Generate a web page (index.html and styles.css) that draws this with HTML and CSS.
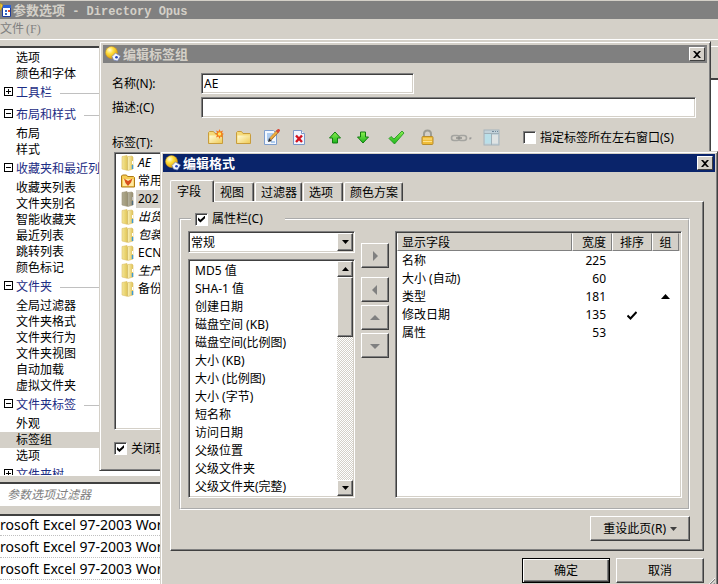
FILE: index.html
```html
<!DOCTYPE html>
<html lang="zh-CN">
<head>
<meta charset="utf-8">
<title>参数选项 - Directory Opus</title>
<link rel="stylesheet" href="styles.css">
</head>
<body>
<svg class="defs" aria-hidden="true">
  <defs>
    <linearGradient id="gold" x1="0" y1="0" x2="1" y2="1"><stop offset="0" stop-color="#fffbd8"/><stop offset="1" stop-color="#f0cc58"/></linearGradient>
    <linearGradient id="tall" x1="0" y1="0" x2="1" y2="0"><stop offset="0" stop-color="#f4e698"/><stop offset="0.45" stop-color="#e3c95c"/><stop offset="0.5" stop-color="#fbf3bc"/><stop offset="1" stop-color="#e0c254"/></linearGradient>
    <radialGradient id="ball" cx="0.35" cy="0.3" r="0.75"><stop offset="0" stop-color="#fffbe0"/><stop offset="0.4" stop-color="#ffe040"/><stop offset="1" stop-color="#e09a00"/></radialGradient>
    <linearGradient id="green" x1="0" y1="0" x2="0" y2="1"><stop offset="0" stop-color="#8cf050"/><stop offset="1" stop-color="#1cb41c"/></linearGradient>
    <symbol id="i-opus" viewBox="0 0 16 16">
      <circle cx="6.500" cy="6.500" r="6" fill="url(#ball)" stroke="#c89020" stroke-width="0.5"/>
      <path d="M7 10.500 10.500 7l1.500 1L15.500 10l-3 5-4-1z" fill="#f4f6ff" stroke="#7483b4" stroke-width="0.7"/>
      <circle cx="11.500" cy="11.200" r="1.300" fill="#2244b8"/>
    </symbol>
    <symbol id="i-tall" viewBox="0 0 14 16">
      <path d="M1 1.500 6 .5l1 1 4-.5 1 1v12l-5 1.500L1 14z" fill="url(#tall)" stroke="#dcc068" stroke-width="0.6"/>
      <path d="M6.500 1.500v13.500" stroke="#c8aa4c" stroke-width="0.7"/>
      <path d="M11.500 10v4" stroke="#3b9bd8" stroke-width="1.400"/>
      <path d="M11.500 6v3" stroke="#fff" stroke-width="1"/>
    </symbol>
    <symbol id="i-folder" viewBox="0 0 17 17">
      <path d="M1.500 14.500v-11l1-1h4l1.500 2h7l.5 1v9z" fill="#f6da78" stroke="#c89c3c"/>
      <path d="M2.500 6.500H15v7.500H2.500z" fill="url(#gold)"/>
    </symbol>
  </defs>
</svg>

<main class="window">
  <header class="window-title">
    <svg class="window-icon" viewBox="0 0 11 16"><path d="M2.500 3.500h8v11h-8z" fill="#fff" stroke="#1c3c9c"/><path d="M2 3h9v3H2z" fill="#2c62d8"/><path d="M5 8h2v2H5zm0 3h2v2H5z" fill="#3468c8"/><path d="M8 8h2v2H8z" fill="#e04c30"/><path d="M0 1l3 2-2 5-1 1z" fill="#f0c838" stroke="#9c7c20" stroke-width=".6"/></svg>
    <h1>参数选项<span class="latin"> - Directory Opus</span></h1>
  </header>
  <nav class="menubar"><button type="button">文件<span>(F)</span></button></nav>
  <div class="workspace">
    <nav class="tree">
      <ul>
        <li>选项</li>
        <li>颜色和字体</li>
        <li class="group"><i class="toggle plus"></i>工具栏</li>
        <li class="group"><i class="toggle"></i>布局和样式</li>
        <li>布局</li>
        <li>样式</li>
        <li class="group"><i class="toggle"></i>收藏夹和最近列表</li>
        <li>收藏夹列表</li>
        <li>文件夹别名</li>
        <li>智能收藏夹</li>
        <li>最近列表</li>
        <li>跳转列表</li>
        <li>颜色标记</li>
        <li class="group"><i class="toggle"></i>文件夹</li>
        <li>全局过滤器</li>
        <li>文件夹格式</li>
        <li>文件夹行为</li>
        <li>文件夹视图</li>
        <li>自动加载</li>
        <li>虚拟文件夹</li>
        <li class="group"><i class="toggle"></i>文件夹标签</li>
        <li>外观</li>
        <li class="selected">标签组</li>
        <li>选项</li>
        <li class="group"><i class="toggle plus"></i>文件夹树</li>
      </ul>
    </nav>
    <section class="page"></section>
  </div>
  <div class="filter"><input type="text" placeholder="参数选项过滤器" aria-label="参数选项过滤器"></div>
  <ul class="files">
    <li>rosoft Excel 97-2003 Wor</li>
    <li>rosoft Excel 97-2003 Wor</li>
    <li>rosoft Excel 97-2003 Wor</li>
  </ul>
</main>

<section class="dialog group-dialog">
  <header class="caption inactive">
    <svg class="icon16"><use href="#i-opus"/></svg>
    <h2>编辑标签组</h2>
    <button type="button" class="close" aria-label="关闭"><svg viewBox="0 0 8 7"><path d="M0 0h2l2 2 2-2h2L5 3.500 8 7H6L4 5 2 7H0l3-3.500z"/></svg></button>
  </header>
  <div class="group-body">
    <div class="form">
      <label for="name">名称(N):</label>
      <input id="name" class="sunken name" type="text" value="AE">
      <label for="desc">描述:(C)</label>
      <input id="desc" class="sunken" type="text">
      <span class="list-label">标签(T):</span>
      <div class="toolbar">
        <button type="button" aria-label="新建"><svg viewBox="0 0 17 17"><use href="#i-folder"/><path d="M12.500 0l1 2.600L16 1.500l-1 2.600 2 .9-2.300 1L16 8.500l-2.500-1-1 2.500-1-2.500L9 8.500 10 6 8 5l2.200-1L9 1.500l2.500 1z" fill="#f47818"/><circle cx="12.500" cy="5" r="1.800" fill="#ffe860"/></svg></button>
        <button type="button" aria-label="新建文件夹"><svg viewBox="0 0 17 17"><use href="#i-folder"/></svg></button>
        <button type="button" aria-label="编辑"><svg viewBox="0 0 17 17"><path d="M1.500 1.500h9l3 3v11h-12z" fill="#f3f8ff" stroke="#7f9fce"/><path d="M4 5h6M4 7h5M4 9h4M4 11h3M8 13h4" stroke="#68a0e0"/><path d="M15 2 7.500 10" stroke="#a06420" stroke-width="3"/><path d="M14 3 7.500 9.500" stroke="#f0b040" stroke-width="1.800"/><path d="M16.500 .5 14 3" stroke="#d84838" stroke-width="3"/><path d="M5 13l1-4 3 3z" fill="#333"/></svg></button>
        <button type="button" aria-label="删除"><svg viewBox="0 0 17 17"><path d="M2.500 1.500h8l3 3v11h-11z" fill="#f0f5ff" stroke="#7c98c8"/><path d="M10.500 1.500v3h3" fill="#fff" stroke="#7c98c8"/><path d="M5 6.500l6 6.500M11 6.500 5 13" stroke="#d41420" stroke-width="2.400"/></svg></button>
        <button type="button" class="gap8" aria-label="上移"><svg viewBox="0 0 17 17"><path d="M8 3 13.500 9h-3v5h-5V9h-3z" fill="url(#green)" stroke="#107c10"/></svg></button>
        <button type="button" aria-label="下移"><svg viewBox="0 0 17 17"><path d="M8 14 13.500 8h-3V3h-5v5h-3z" fill="url(#green)" stroke="#107c10"/></svg></button>
        <button type="button" class="gap5" aria-label="应用"><svg viewBox="0 0 17 17"><path d="M1 9.500l2-2 3 2.500L14 2l2 2-9.500 11z" fill="url(#green)" stroke="#189018" stroke-width="0.800"/></svg></button>
        <button type="button" class="gap3" aria-label="锁定"><svg viewBox="0 0 17 17"><path d="M5 8V5q0-3.500 3.500-3.500T12 5v3" fill="none" stroke="#9c9c94" stroke-width="2"/><rect x="3" y="7.500" width="11" height="8" rx="1" fill="#efbc38" stroke="#b88c2c"/><path d="M4 10h9M4 12.500h9" stroke="#ffe28c"/></svg></button>
        <button type="button" class="gap3 wide" aria-label="链接"><svg viewBox="0 0 22 17"><rect x="1.500" y="6.500" width="8" height="5" rx="2.500" fill="none" stroke="#a4a4a0" stroke-width="1.600"/><rect x="8.500" y="6.500" width="8" height="5" rx="2.500" fill="none" stroke="#a4a4a0" stroke-width="1.600"/><path d="M6 9h6" stroke="#8c8c88" stroke-width="1.400"/><path d="M19.500 8.500h2v1h-1v1h-1z" fill="#888"/></svg></button>
        <button type="button" aria-label="布局"><svg viewBox="0 0 17 17"><rect x="1" y="1" width="15" height="15" fill="#c3d2da" stroke="#a6b4bc"/><path d="M2 5h6.500v9.500H2z" fill="#b9dfe9"/><path d="M9 6h6v8.500H9z" fill="#dfe3e3"/><path d="M1 4.500h15M8.500 4.500V16" stroke="#a0b0b8"/><path d="M9 2.500h2m1 0h1m1 0h1" stroke="#71889a"/></svg></button>
        <label class="check dest"><input type="checkbox">指定标签所在左右窗口(S)</label>
      </div>
    </div>
    <ul class="tabs-list sunken">
      <li><svg><use href="#i-tall"/></svg><em>AE</em></li>
      <li><svg viewBox="0 0 14 16"><path d="M.5 14V3l1-1h4l1 1.500h6l1 1V14z" fill="#f6cc54" stroke="#b07a14"/><path d="M2 6h10.500v7H2z" fill="#ffe9a0"/><path d="M3 5.500l4 2.500 4.500-2.500-1.500 4-3 3.500-2.500-3z" fill="#d8501c"/></svg><span>常用</span></li>
      <li class="selected"><svg><use href="#i-tall"/></svg><span>202</span></li>
      <li><svg><use href="#i-tall"/></svg><em>出货</em></li>
      <li><svg><use href="#i-tall"/></svg><em>包装</em></li>
      <li><svg><use href="#i-tall"/></svg><span>ECN</span></li>
      <li><svg><use href="#i-tall"/></svg><em>生产</em></li>
      <li><svg><use href="#i-tall"/></svg><span>备份</span></li>
    </ul>
    <label class="check"><input type="checkbox" checked>关闭现</label>
  </div>
</section>

<section class="dialog format-dialog">
  <header class="caption">
    <svg class="icon16"><use href="#i-opus"/></svg>
    <h2>编辑格式</h2>
    <button type="button" class="close" aria-label="关闭"><svg viewBox="0 0 8 7"><path d="M0 0h2l2 2 2-2h2L5 3.500 8 7H6L4 5 2 7H0l3-3.500z"/></svg></button>
  </header>
  <div class="format-body">
    <div class="tabs" role="tablist">
      <button type="button" role="tab" aria-selected="true" class="tab active">字段</button>
      <button type="button" role="tab" class="tab">视图</button>
      <button type="button" role="tab" class="tab">过滤器</button>
      <button type="button" role="tab" class="tab">选项</button>
      <button type="button" role="tab" class="tab">颜色方案</button>
    </div>
    <div class="panel">
      <fieldset>
        <legend><label class="check"><input type="checkbox" checked>属性栏(C)</label></legend>
        <div class="columns">
          <div class="source">
            <div class="combo sunken">
              <select aria-label="类别"><option>常规</option></select>
              <span class="arrow raised"><svg viewBox="0 0 7 4"><path d="M0 0h7L3.500 4z"/></svg></span>
            </div>
            <div class="listbox sunken">
              <ul>
                <li>MD5 值</li>
                <li>SHA-1 值</li>
                <li>创建日期</li>
                <li>磁盘空间 (KB)</li>
                <li>磁盘空间(比例图)</li>
                <li>大小 (KB)</li>
                <li>大小 (比例图)</li>
                <li>大小 (字节)</li>
                <li>短名称</li>
                <li>访问日期</li>
                <li>父级位置</li>
                <li>父级文件夹</li>
                <li>父级文件夹(完整)</li>
              </ul>
              <div class="scrollbar">
                <span class="arrow raised"><svg viewBox="0 0 7 4"><path d="M0 4h7L3.500 0z"/></svg></span>
                <span class="thumb raised"></span>
                <span class="track"></span>
                <span class="arrow raised"><svg viewBox="0 0 7 4"><path d="M0 0h7L3.500 4z"/></svg></span>
              </div>
            </div>
          </div>
          <div class="movers">
            <button type="button" class="raised first" aria-label="添加"><svg viewBox="0 0 10 10"><path d="M3 0v10l5-5z"/></svg></button>
            <button type="button" class="raised" aria-label="移除"><svg viewBox="0 0 10 10"><path d="M7 0v10L2 5z"/></svg></button>
            <button type="button" class="raised" aria-label="上移"><svg viewBox="0 0 10 10"><path d="M0 7h10L5 2z"/></svg></button>
            <button type="button" class="raised" aria-label="下移"><svg viewBox="0 0 10 10"><path d="M0 3h10L5 8z"/></svg></button>
          </div>
          <div class="fields sunken">
            <table>
              <colgroup><col><col class="w-width"><col class="w-sort"><col class="w-group"></colgroup>
              <thead><tr><th>显示字段</th><th class="num">宽度</th><th class="mid">排序</th><th class="mid">组</th></tr></thead>
              <tbody>
                <tr><td>名称</td><td class="num">225</td><td></td><td></td></tr>
                <tr><td>大小 (自动)</td><td class="num">60</td><td></td><td></td></tr>
                <tr><td>类型</td><td class="num">181</td><td></td><td class="mid"><svg class="mark" viewBox="0 0 10 10"><path d="M0 7h9L4.500 2z"/></svg></td></tr>
                <tr><td>修改日期</td><td class="num">135</td><td class="mid"><svg class="mark" viewBox="0 0 10 10"><path d="M.5 5.500l3 3L9.500 2" fill="none" stroke="#000" stroke-width="2"/></svg></td><td></td></tr>
                <tr><td>属性</td><td class="num">53</td><td></td><td></td></tr>
              </tbody>
            </table>
            <span class="spare"></span>
          </div>
        </div>
      </fieldset>
      <div class="reset"><button type="button" class="raised">重设此页(R)<svg viewBox="0 0 7 4"><path d="M0 0h7L3.500 4z"/></svg></button></div>
    </div>
    <footer class="actions">
      <button type="button" class="raised default">确定</button>
      <button type="button" class="raised">取消</button>
    </footer>
  </div>
  <svg class="grip" viewBox="0 0 8 8"><path d="M1 8 8 1M5 8l3-3" stroke="#808080" stroke-width="1.500"/><path d="M0 8 8 0M4 8l4-4" stroke="#fff"/></svg>
</section>
</body>
</html>
```

FILE: styles.css
```css
:root {
  --face: #d4d0c8;
  --shade: #808080;
  --dark: #404040;
  --navy: #0a246a;
}

* { box-sizing: border-box; }

body {
  margin: 0;
  height: 100vh;
  overflow: hidden;
  position: relative;
  background: var(--face);
  color: #000;
  font: 12px/16px "Noto Sans", "Noto Sans CJK SC", sans-serif;
}

ul { list-style: none; margin: 0; padding: 0; }
h1, h2 { margin: 0; font-size: 13px; line-height: 18px; font-weight: bold; white-space: nowrap; }
button, input, select { font: inherit; color: inherit; margin: 0; padding: 0; }
button { border: 0; background: none; }
svg { display: block; flex: none; }
.defs { position: absolute; width: 0; height: 0; }

.sunken {
  border: 1px solid;
  border-color: var(--shade) #fff #fff var(--shade);
  box-shadow: inset 1px 1px var(--dark), inset -1px -1px var(--face);
  background: #fff;
}

.raised {
  border: 1px solid;
  border-color: #fff var(--dark) var(--dark) #fff;
  box-shadow: inset -1px -1px var(--shade);
  background: var(--face);
}

/* Preferences window */
.window { height: 100vh; display: flex; flex-direction: column; }
.window-title {
  display: flex;
  margin-top: 1px;
  height: 18px;
  gap: 2px;
  background: var(--shade);
  color: var(--face);
}
.window-icon { width: 11px; height: 16px; margin-top: 1px; }
.window-title h1 { white-space: pre; }
.latin { font: bold 12px/16px "Liberation Mono", monospace; }
.menubar { height: 27px; padding-top: 2px; color: var(--shade); }
.menubar::after { content: ""; display: block; height: 1px; margin-top: 2px; background: #fff; }
.menubar button { display: flex; gap: 2px; }
.menubar span { font-family: "Liberation Serif", serif; }

.workspace { flex: 1; min-height: 0; display: flex; }
.tree {
  width: 159px;
  padding-top: 2px;
  border-top: 2px solid var(--dark);
  background: #fff;
  overflow: hidden;
}
.tree li { padding-left: 16px; white-space: nowrap; line-height: 16px; }
.tree .selected { background: var(--face); }
.tree .group {
  display: flex;
  align-items: center;
  padding-left: 4px;
  color: #1c2c84;
  line-height: 22px;
}
.tree .group::after { content: ""; flex: 1; height: 1px; margin-left: 8px; background: #c0c0c0; }
.toggle {
  width: 9px;
  height: 9px;
  margin: 0 3px 4px 0;
  border: 1px solid #000;
  background: linear-gradient(#000, #000) center / 5px 1px no-repeat;
}
.toggle.plus {
  background: linear-gradient(#000, #000) center / 5px 1px no-repeat, linear-gradient(#000, #000) center / 1px 5px no-repeat;
}
.page { flex: 1; border-top: 1px solid #fff; background: linear-gradient(var(--face) 31px, var(--dark) 31px, var(--dark) 33px, #fff 33px); }

.filter { padding: 6px 0 8px; border-top: 1px solid #fff; }
.filter input {
  display: block;
  width: 100%;
  height: 24px;
  padding-left: 7px;
  border: 0;
  border-top: 2px solid var(--dark);
  border-bottom: 1px solid #fff;
  background: #fff;
  font-style: italic;
}
.filter input::placeholder { color: var(--shade); opacity: 1; }
.files { height: 70px; background: #fff; box-shadow: inset 0 2px var(--dark); font-size: 14px; }
.files li { height: 22px; line-height: 22px; border-bottom: 1px dotted #c0c0c0; white-space: nowrap; }

/* Dialog frame */
.dialog {
  position: absolute;
  border: 1px solid;
  border-color: var(--face) var(--dark) var(--dark) var(--face);
  box-shadow: inset 1px 1px #fff, inset -1px -1px var(--shade);
  background: var(--face);
}
.group-dialog { left: 99px; right: 7px; top: 41px; padding: 3px; }
.format-dialog { left: 160px; right: 0; top: 151px; padding: 2px; }
.caption {
  display: flex;
  align-items: center;
  gap: 2px;
  height: 18px;
  padding: 0 2px;
  background: var(--navy);
  color: #fff;
}
.caption.inactive { background: var(--shade); color: var(--face); }
.icon16 { width: 16px; height: 16px; }
.caption h2 { flex: 1; }
.close {
  display: grid;
  place-items: center;
  width: 16px;
  height: 14px;
  border: 1px solid;
  border-color: #fff var(--dark) var(--dark) #fff;
  background: var(--face);
}
.close svg { width: 8px; height: 7px; }

.check { display: flex; align-items: center; gap: 4px; white-space: nowrap; }
.check input {
  appearance: none;
  width: 13px;
  height: 13px;
  border: 1px solid;
  border-color: var(--shade) #fff #fff var(--shade);
  box-shadow: inset 1px 1px var(--dark);
  background: #fff;
  display: grid;
  place-items: center;
}
.check input:checked::before {
  content: "";
  width: 7px;
  height: 7px;
  background: #000;
  clip-path: polygon(0 30%, 35% 62%, 100% 0, 100% 40%, 35% 100%, 0 68%);
}

/* Tab group dialog */
.group-body { padding: 10px 11px 12px 9px; }
.form { display: grid; grid-template-columns: 86px 1fr; column-gap: 3px; row-gap: 3px; }
.form > label { line-height: 22px; }
.form > input { height: 21px; width: 100%; padding: 0 2px; outline: 0; }
.form > .name { width: 43%; }
.form > label { height: 21px; }
.list-label { padding-top: 14px; }
.toolbar { display: flex; align-items: center; gap: 11px; height: 31px; padding: 2px 0 0 6px; }
.toolbar button { width: 17px; height: 17px; }
.toolbar .wide { width: 22px; }
.toolbar button svg { width: 100%; height: 17px; }
.toolbar .gap8 { margin-left: 8px; }
.toolbar .gap5 { margin-left: 5px; }
.toolbar .gap3 { margin-left: 3px; }
.dest { margin-left: 12px; }

.tabs-list { height: 278px; margin: 0 0 12px 2px; padding: 1px; overflow: hidden; }
.tabs-list li { display: flex; align-items: center; gap: 1px; height: 18px; padding-left: 5px; }
.tabs-list svg { width: 14px; height: 16px; }
.tabs-list em, .tabs-list span { padding-left: 2px; line-height: 18px; }
.tabs-list .selected span { flex: 1; background: var(--face); }
.tabs-list .selected svg { filter: grayscale(0.6) brightness(0.75); }
.group-body > .check { margin-left: 2px; height: 13px; }

/* Format dialog */
.format-body { padding: 8px 11px 8px 7px; }
.tabs { display: flex; align-items: flex-end; height: 21px; gap: 1px; }
.tab {
  height: 19px;
  min-width: 40px;
  padding: 2px 4px 0 5px;
  border: 1px solid;
  border-color: #fff var(--dark) transparent #fff;
  border-bottom: 0;
  border-radius: 2px 2px 0 0;
  box-shadow: inset -1px 0 var(--shade);
  text-align: left;
  white-space: nowrap;
}
.tab.active {
  height: 22px;
  margin: 0 -1px -1px 0;
  padding: 0 12px 0 6px;
  background: var(--face);
  z-index: 1;
}
.panel {
  padding: 9px 13px 9px 8px;
  border: 1px solid;
  border-color: #fff var(--dark) var(--dark) #fff;
  box-shadow: inset -1px -1px var(--shade);
}
fieldset { min-width: 0; margin: 0; padding: 4px 6px 10px 7px; border: 2px groove #fff; }
legend { height: 16px; margin-left: 3px; padding: 0 22px 0 4px; }
.columns { display: flex; gap: 6px; }
.source { width: 167px; display: flex; flex-direction: column; gap: 6px; }
.combo { display: flex; height: 22px; padding: 1px; }
.combo select { flex: 1; appearance: none; border: 0; background: none; padding: 1px 1px 0; outline: 0; }
.arrow { display: grid; place-items: center; width: 16px; height: 16px; flex: none; }
.combo .arrow { height: 18px; }
.arrow svg { width: 7px; height: 4px; }
.listbox { display: flex; padding: 1px; }
.listbox ul { flex: 1; padding-top: 1px; }
.listbox li { height: 18px; padding-left: 5px; line-height: 18px; white-space: nowrap; }
.scrollbar { display: flex; flex-direction: column; width: 16px; }
.thumb { height: 60px; }
.track { flex: 1; background: repeating-conic-gradient(var(--face) 0 25%, #fff 0 50%) 0 0 / 2px 2px; }
.movers { display: flex; flex-direction: column; gap: 3px; width: 28px; padding-top: 12px; }
.movers button { display: grid; place-items: center; height: 25px; }
.movers .first { margin-bottom: 6px; }
.movers svg { width: 10px; height: 10px; fill: var(--shade); }

.fields { flex: 1; display: flex; padding: 1px; }
table { flex: 1; align-self: flex-start; width: 100%; table-layout: fixed; border-collapse: separate; border-spacing: 0; }
.w-width, .w-sort { width: 40px; }
.w-group { width: 27px; }
th {
  height: 18px;
  padding: 1px 5px 0 4px;
  border: 1px solid;
  border-color: var(--face) var(--shade) var(--shade) #fff;
  background: var(--face);
  font-weight: normal;
  text-align: left;
  line-height: 15px;
}
td { height: 18px; padding: 1px 6px 0 5px; line-height: 17px; }
.num { text-align: right; }
.mid { text-align: center; padding-left: 0; padding-right: 0; }
.mark { width: 10px; height: 10px; margin: 0 auto; }
.spare { width: 1px; height: 18px; background: var(--face); }

.reset { display: flex; justify-content: flex-end; margin-top: 6px; }
.reset button { display: flex; align-items: center; gap: 4px; height: 25px; padding: 0 12px; }
.reset svg { width: 7px; height: 4px; fill: var(--dark); }
.actions { display: flex; justify-content: flex-end; gap: 6px; padding-top: 7px; }
.actions button { width: 88px; height: 25px; }
.actions .default { border-color: #000; box-shadow: inset 1px 1px #fff, inset -1px -1px var(--dark), inset -2px -2px var(--shade); }
.grip { position: absolute; right: 2px; bottom: 8px; width: 7px; height: 7px; }
```
